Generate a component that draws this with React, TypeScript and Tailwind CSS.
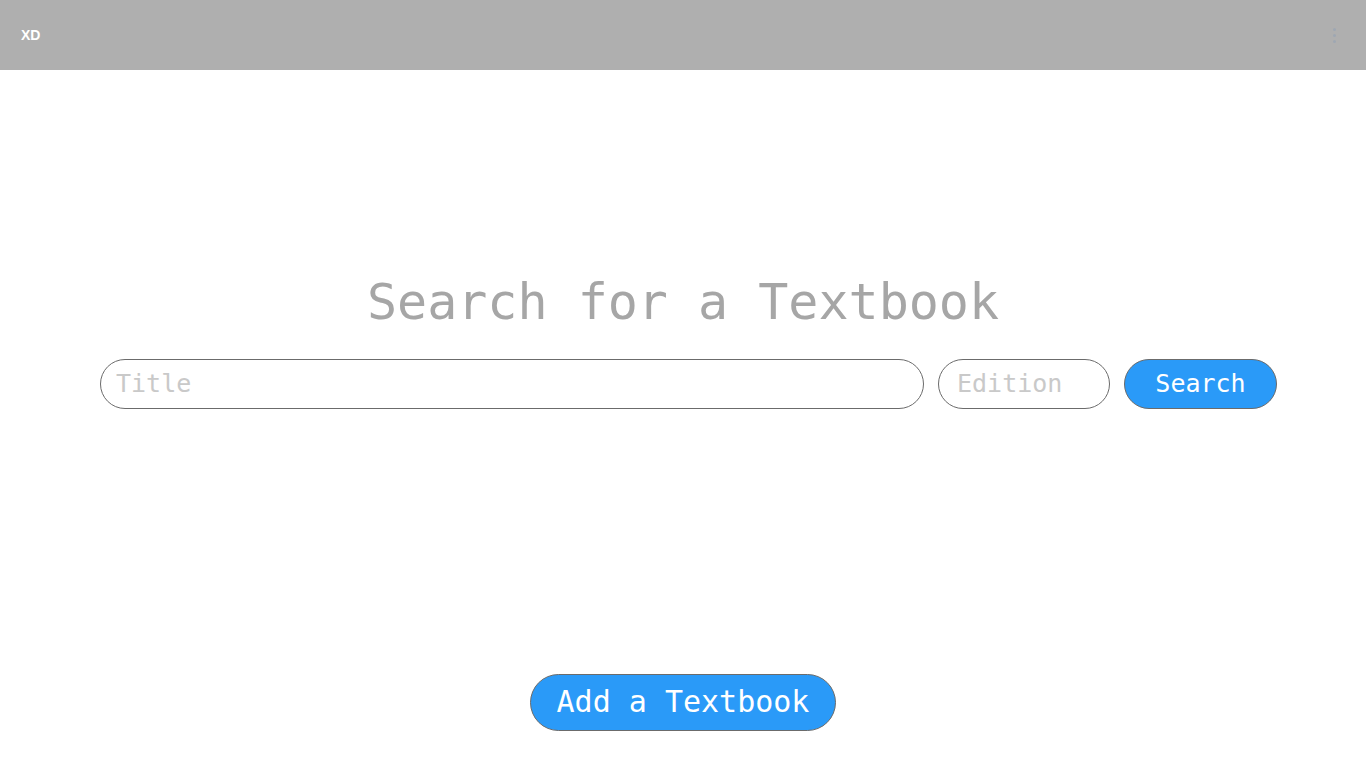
import React from "react";

export default function App() {
  const mono = { fontFamily: '"DejaVu Sans Mono", monospace' } as React.CSSProperties;
  return (
    <div className="w-[1366px] h-[768px] bg-white flex flex-col overflow-hidden">
      <header className="h-[70px] bg-[#afafaf] flex items-center justify-between pl-[21px] pr-[30px] shrink-0">
        <span className="text-white font-bold text-[14px] font-['Liberation_Sans',Arial,sans-serif] leading-none">XD</span>
        <div className="flex flex-col gap-[3px] items-center">
          <span className="w-[3px] h-[3px] rounded-full bg-[#9ea7b2]" />
          <span className="w-[3px] h-[3px] rounded-full bg-[#9ea7b2]" />
          <span className="w-[3px] h-[3px] rounded-full bg-[#9ea7b2]" />
        </div>
      </header>
      <main className="flex-1 flex flex-col" style={mono}>
        <h1 className="mt-[200px] text-center text-[50px] leading-[64px] text-[#a6a6a6] font-normal">
          Search for a Textbook
        </h1>
        <div className="mt-[25px] ml-[100px] flex gap-[14px]">
          <input
            placeholder="Title"
            className="w-[824px] h-[50px] rounded-full border border-[#6b6b6b] px-[15px] pb-[1px] text-[25px] text-[#555] placeholder:text-[#c9c9c9] outline-none bg-white"
          />
          <input
            placeholder="Edition"
            className="w-[172px] h-[50px] rounded-full border border-[#6b6b6b] px-[18px] pb-[1px] text-[25px] text-[#555] placeholder:text-[#c9c9c9] outline-none bg-white"
          />
          <button className="w-[153px] h-[50px] rounded-full border border-[#6b6b6b] bg-[#2a9af8] text-white text-[25px] pb-[1px] flex items-center justify-center">
            Search
          </button>
        </div>
        <div className="mt-[265px] flex justify-center">
          <button className="w-[306px] h-[57px] rounded-full border border-[#6b6b6b] bg-[#2a9af8] text-white text-[30px] pb-[3px] flex items-center justify-center">
            Add a Textbook
          </button>
        </div>
      </main>
    </div>
  );
}
